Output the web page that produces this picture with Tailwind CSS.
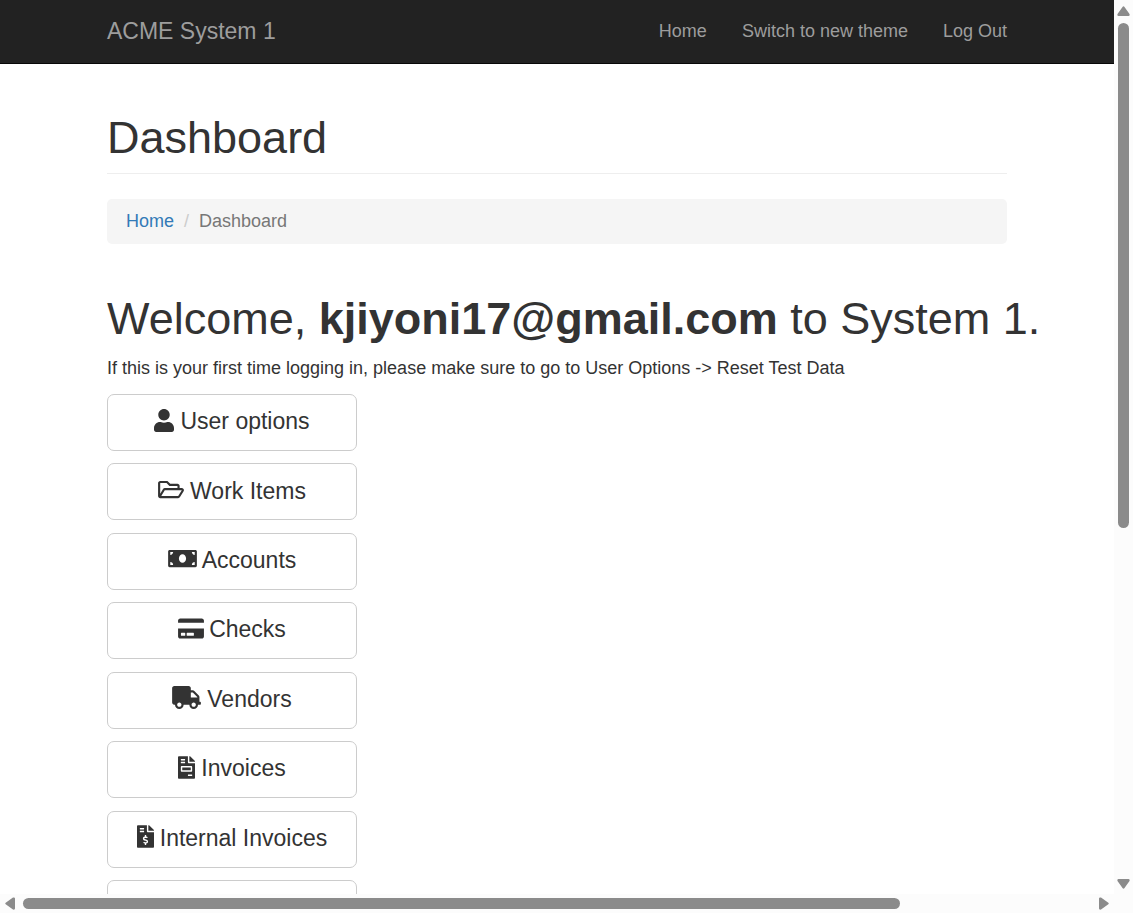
<!DOCTYPE html>
<html lang="en">
<head>
<meta charset="utf-8">
<meta name="viewport" content="width=device-width, initial-scale=1">
<title>ACME System 1 - Dashboard</title>
<script src="https://cdn.jsdelivr.net/npm/@tailwindcss/browser@4"></script>
</head>
<body class="grid h-screen grid-cols-[minmax(0,1fr)_19px] grid-rows-[minmax(0,1fr)_19px] overflow-hidden bg-[#fcfcfc] font-['Liberation_Sans',Arial,sans-serif] text-lg text-[#333]">
<div class="overflow-hidden bg-white">
  <header class="border-b border-[#080808] bg-[#222] text-[#9d9d9d]">
    <nav class="mx-auto flex h-[63px] max-w-[900px] items-center justify-between">
      <a href="#" class="text-[23px]">ACME System 1</a>
      <div class="flex gap-[35px] pb-[2px]">
        <a href="#">Home</a>
        <a href="#">Switch to new theme</a>
        <a href="#">Log Out</a>
      </div>
    </nav>
  </header>
  <main class="mx-auto max-w-[900px] pt-[49px]">
    <h1 class="border-b border-[#eee] pb-[10px] text-[45px] leading-[50px]">Dashboard</h1>
    <ol class="mt-[25px] flex h-[45px] items-center rounded-[5px] bg-[#f5f5f5] px-[19px] pb-[2px]">
      <li><a href="#" class="text-[#337ab7]">Home</a></li>
      <li class="px-[10px] text-[#ccc]" aria-hidden="true">/</li>
      <li class="text-[#777]">Dashboard</li>
    </ol>
    <h2 class="mt-[50px] text-[45px] leading-[50px] whitespace-nowrap">Welcome, <b>kjiyoni17@gmail.com</b> to System 1.</h2>
    <p class="mt-[12px] leading-[25px]">If this is your first time logging in, please make sure to go to User Options -&gt; Reset Test Data</p>
    <div class="mt-[13px] flex h-[543px] w-[250px] flex-col justify-between text-[23px]">
      <button class="flex h-[57px] items-center justify-center gap-[6px] rounded-[7px] border border-[#ccc] bg-white pb-[1px]">
        <svg class="mb-[4px] h-[23px] w-[20px]" viewBox="0 0 448 512" fill="currentColor" aria-hidden="true"><path d="M224 256c70.7 0 128-57.3 128-128S294.7 0 224 0 96 57.3 96 128s57.3 128 128 128zm89.6 32h-16.7c-22.2 10.2-46.9 16-72.9 16s-50.6-5.8-72.9-16h-16.7C60.2 288 0 348.2 0 422.4V464c0 26.5 21.5 48 48 48h352c26.5 0 48-21.5 48-48v-41.6c0-74.2-60.2-134.4-134.4-134.4z"/></svg>User options</button>
      <button class="flex h-[57px] items-center justify-center gap-[6px] rounded-[7px] border border-[#ccc] bg-white pb-[1px]">
        <svg class="mb-[4px] h-[23px] w-[26px]" viewBox="0 0 576 512" fill="currentColor" aria-hidden="true"><path d="M527.9 224H480v-48c0-26.5-21.5-48-48-48H272l-64-64H48C21.5 64 0 85.5 0 112v288c0 26.5 21.5 48 48 48h400c16.5 0 31.9-8.5 40.7-22.6l79.9-128c20-31.9-3-73.4-40.7-73.4zM48 118c0-3.3 2.7-6 6-6h134.1l64 64H426c3.3 0 6 2.7 6 6v42H152c-16.8 0-32.4 8.8-41.1 23.2L48 351.4zm400 282H72l77.2-128H528z"/></svg>Work Items</button>
      <button class="flex h-[57px] items-center justify-center gap-[5px] rounded-[7px] border border-[#ccc] bg-white pb-[1px]">
        <svg class="mb-[4px] h-[23px] w-[29px]" viewBox="0 0 640 512" fill="currentColor" aria-hidden="true"><path d="M608 64H32C14.33 64 0 78.33 0 96v320c0 17.67 14.33 32 32 32h576c17.67 0 32-14.33 32-32V96c0-17.67-14.33-32-32-32zM48 400v-64c35.35 0 64 28.65 64 64H48zm0-224v-64h64c0 35.35-28.65 64-64 64zm272 176c-44.19 0-80-42.99-80-96 0-53.02 35.82-96 80-96s80 42.98 80 96c0 53.03-35.83 96-80 96zm272 48h-64c0-35.35 28.65-64 64-64v64zm0-224c-35.35 0-64-28.65-64-64h64v64z"/></svg>Accounts</button>
      <button class="flex h-[57px] items-center justify-center gap-[5px] rounded-[7px] border border-[#ccc] bg-white pb-[1px]">
        <svg class="mb-[4px] h-[23px] w-[26px]" viewBox="0 0 576 512" fill="currentColor" aria-hidden="true"><path d="M0 432c0 26.5 21.5 48 48 48h480c26.5 0 48-21.5 48-48V256H0v176zm192-68c0-6.6 5.4-12 12-12h136c6.6 0 12 5.4 12 12v40c0 6.6-5.4 12-12 12H204c-6.6 0-12-5.4-12-12v-40zm-128 0c0-6.6 5.4-12 12-12h72c6.6 0 12 5.4 12 12v40c0 6.6-5.4 12-12 12H76c-6.6 0-12-5.4-12-12v-40zM576 80v48H0V80c0-26.5 21.5-48 48-48h480c26.5 0 48 21.5 48 48z"/></svg>Checks</button>
      <button class="flex h-[57px] items-center justify-center gap-[6px] rounded-[7px] border border-[#ccc] bg-white pb-[1px]">
        <svg class="mb-[4px] h-[23px] w-[29px]" viewBox="0 0 640 512" fill="currentColor" aria-hidden="true"><path d="M624 352h-16V243.9c0-12.7-5.1-24.9-14.1-33.9L494 110.1c-9-9-21.2-14.1-33.9-14.1H416V48c0-26.5-21.5-48-48-48H48C21.5 0 0 21.5 0 48v320c0 26.5 21.5 48 48 48h16c0 53 43 96 96 96s96-43 96-96h128c0 53 43 96 96 96s96-43 96-96h48c8.8 0 16-7.2 16-16v-32c0-8.8-7.2-16-16-16zM160 464c-26.5 0-48-21.5-48-48s21.5-48 48-48 48 21.5 48 48-21.5 48-48 48zm320 0c-26.5 0-48-21.5-48-48s21.5-48 48-48 48 21.5 48 48-21.5 48-48 48zm80-208H416V144h44.1l99.9 99.9V256z"/></svg>Vendors</button>
      <button class="flex h-[57px] items-center justify-center gap-[6px] rounded-[7px] border border-[#ccc] bg-white pb-[1px]">
        <svg class="mb-[4px] h-[23px] w-[17px]" viewBox="0 0 384 512" fill="currentColor" aria-hidden="true"><path d="M288 256H96v64h192v-64zm89-151L279.1 7c-4.5-4.5-10.6-7-17-7H256v128h128v-6.1c0-6.3-2.5-12.4-7-16.9zm-153 31V0H24C10.7 0 0 10.7 0 24v464c0 13.3 10.7 24 24 24h336c13.3 0 24-10.7 24-24V160H248c-13.2 0-24-10.8-24-24zM64 72c0-4.42 3.58-8 8-8h80c4.42 0 8 3.58 8 8v16c0 4.42-3.58 8-8 8H72c-4.42 0-8-3.58-8-8V72zm0 64c0-4.42 3.58-8 8-8h80c4.42 0 8 3.58 8 8v16c0 4.42-3.58 8-8 8H72c-4.42 0-8-3.58-8-8v-16zm256 304c0 4.42-3.58 8-8 8h-80c-4.42 0-8-3.58-8-8v-16c0-4.42 3.58-8 8-8h80c4.42 0 8 3.58 8 8v16zm0-200v96c0 8.84-7.16 16-16 16H80c-8.84 0-16-7.16-16-16v-96c0-8.84 7.16-16 16-16h224c8.84 0 16 7.16 16 16z"/></svg>Invoices</button>
      <button class="flex h-[57px] items-center justify-center gap-[6px] rounded-[7px] border border-[#ccc] bg-white pb-[1px]">
        <svg class="mb-[4px] h-[23px] w-[17px]" viewBox="0 0 384 512" fill="currentColor" aria-hidden="true"><path d="M377 105L279.1 7c-4.5-4.5-10.6-7-17-7H256v128h128v-6.1c0-6.3-2.5-12.4-7-16.9zm-153 31V0H24C10.7 0 0 10.7 0 24v464c0 13.3 10.7 24 24 24h336c13.3 0 24-10.7 24-24V160H248c-13.2 0-24-10.8-24-24zM64 72c0-4.42 3.58-8 8-8h80c4.42 0 8 3.58 8 8v16c0 4.42-3.58 8-8 8H72c-4.42 0-8-3.58-8-8V72zm0 80v-16c0-4.42 3.58-8 8-8h80c4.42 0 8 3.58 8 8v16c0 4.42-3.58 8-8 8H72c-4.42 0-8-3.58-8-8zm144 263.88V440c0 4.42-3.58 8-8 8h-16c-4.42 0-8-3.58-8-8v-24.29c-11.29-.58-22.27-4.52-31.37-11.35-3.9-2.93-4.1-8.77-.57-12.14l11.75-11.21c2.77-2.64 6.89-2.76 10.13-.73 3.87 2.42 8.26 3.72 12.82 3.72h28.11c6.5 0 11.8-5.92 11.8-13.19 0-5.95-3.61-11.19-8.77-12.73l-45-13.5c-18.59-5.58-31.58-23.42-31.58-43.39 0-24.52 19.05-44.44 42.67-45.07V232c0-4.42 3.58-8 8-8h16c4.42 0 8 3.58 8 8v24.29c11.29.58 22.27 4.51 31.37 11.35 3.9 2.93 4.1 8.77.57 12.14l-11.75 11.21c-2.77 2.64-6.89 2.76-10.13.73-3.87-2.43-8.26-3.72-12.82-3.72h-28.11c-6.5 0-11.8 5.92-11.8 13.19 0 5.95 3.61 11.19 8.77 12.73l45 13.5c18.59 5.58 31.58 23.42 31.58 43.39 0 24.53-19.05 44.44-42.67 45.07z"/></svg>Internal Invoices</button>
      <button class="h-[57px] rounded-[7px] border border-[#ccc] bg-white" aria-label="More"></button>
    </div>
  </main>
</div>
<!-- vertical scrollbar -->
<div class="flex flex-col items-center justify-between pt-[6px] pb-[5px]" aria-hidden="true">
  <svg class="h-[10px] w-[13px] shrink-0" viewBox="0 0 13 10" fill="#8b8b8b"><path d="M5.500 1Q6.500 -.5 7.500 1L12.500 8Q13 10 11.500 10H1.500Q0 10 .5 8Z"/></svg>
  <div class="mt-[7px] min-h-0 w-[11px] flex-1">
    <div class="h-[59%] rounded-full bg-[#8b8b8b]"></div>
  </div>
  <svg class="h-[10px] w-[13px] shrink-0" viewBox="0 0 13 10" fill="#8b8b8b"><path d="M5.500 9Q6.500 10.500 7.500 9L12.500 2Q13 0 11.500 0H1.500Q0 0 .5 2Z"/></svg>
</div>
<!-- horizontal scrollbar -->
<div class="flex items-center justify-between pr-[5px] pl-[5px]" aria-hidden="true">
  <svg class="h-[13px] w-[10px] shrink-0" viewBox="0 0 10 13" fill="#8b8b8b"><path d="M1 5.500Q-.5 6.500 1 7.500L8 12.500Q10 13 10 11.500V1.500Q10 0 8 .5Z"/></svg>
  <div class="ml-[8px] h-[11px] min-w-0 flex-1">
    <div class="h-full w-[81.5%] rounded-full bg-[#8b8b8b]"></div>
  </div>
  <svg class="h-[13px] w-[10px] shrink-0" viewBox="0 0 10 13" fill="#8b8b8b"><path d="M9 5.500Q10.500 6.500 9 7.500L2 12.500Q0 13 0 11.500V1.500Q0 0 2 .5Z"/></svg>
</div>
</body>
</html>
